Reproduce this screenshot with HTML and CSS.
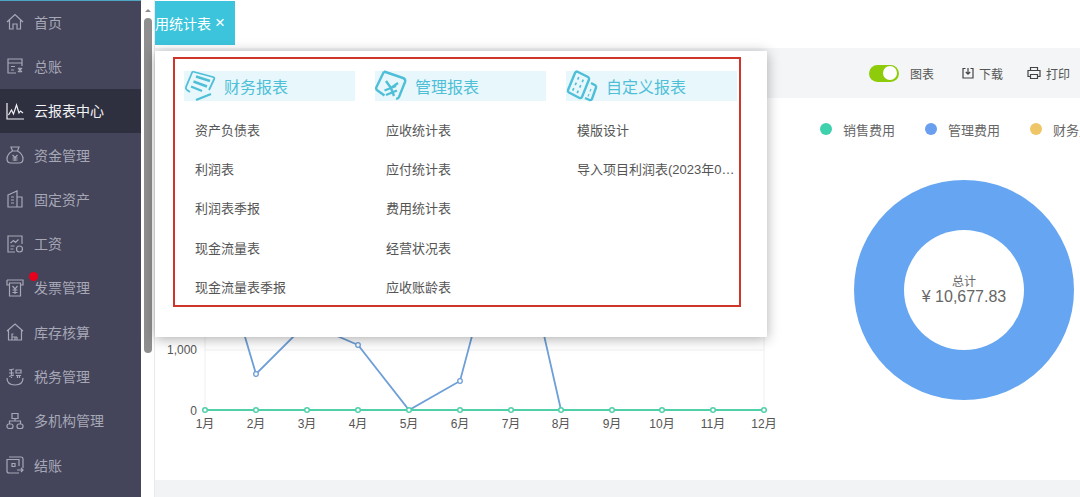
FILE: index.html
```html
<!DOCTYPE html>
<html>
<head>
  <meta charset="utf-8">
  <title>云报表中心</title>
  <link rel="stylesheet" href="styles.css">
</head>
<body>
  <div class="page">
    <div class="sidebar">
      <div class="nav-item">
        <svg class="nav-icon" viewBox="0 0 18 18"><path d="M1 9 9 1.500 17 9M3.500 7v9h3.500v-5h4v5h3.500V7"/></svg>
        <span>首页</span>
      </div>
      <div class="nav-item">
        <svg class="nav-icon" viewBox="0 0 18 18"><path d="M16 9V2H2v14h8M2 6h14M5 9.500h4M5 13h3M12 11l4 4M16 11l-4 4M14 10.500v5"/></svg>
        <span>总账</span>
      </div>
      <div class="nav-item active">
        <svg class="nav-icon" viewBox="0 0 18 18"><path d="M1 1v16h17M2.500 13l3-5 2 4 3-9 2.500 8 1.500-2 2.500 2"/></svg>
        <span>云报表中心</span>
      </div>
      <div class="nav-item">
        <svg class="nav-icon" viewBox="0 0 18 18"><path d="M5 1h8l-1.500 4h-5zM6.500 5C3 7 1 10 1 13c0 3 2 4 4 4h8c2 0 4-1 4-4 0-3-2-6-5.500-8M6.500 9 9 11.500 11.500 9M9 11.500V15M6.500 12h5M6.500 14h5"/></svg>
        <span>资金管理</span>
      </div>
      <div class="nav-item">
        <svg class="nav-icon" viewBox="0 0 18 18"><path d="M2 5 11 1v16H2zM11 7h5v10h-5M5 7h3M5 10h3M5 13h3"/></svg>
        <span>固定资产</span>
      </div>
      <div class="nav-item">
        <svg class="nav-icon" viewBox="0 0 18 18"><path d="M9 17H2V1h14v8M4.500 8l3-2.500 2 2 3-3M4.500 11h4M4.500 14h3"/><circle cx="13.500" cy="14" r="3"/></svg>
        <span>工资</span>
      </div>
      <div class="nav-item">
        <svg class="nav-icon" viewBox="0 0 18 18"><path d="M1 1h16v5h-2.500M1 1v5h2.500M3.500 4h11v13h-11zM6.500 7 9 10l2.500-3M6.500 11h5M6.500 13.500h5M9 10v5"/></svg>
        <span>发票管理</span>
      </div>
      <div class="nav-item">
        <svg class="nav-icon" viewBox="0 0 18 18"><path d="M1 8 9 1l8 7M2.500 7v10h13V7M6 17v-6h1.500M6 14h5M9 14v3M11 14v3"/></svg>
        <span>库存核算</span>
      </div>
      <div class="nav-item">
        <svg class="nav-icon" viewBox="0 0 18 18"><path d="M1 10c0 4.500 3 7 8 7s8-2.500 8-7M3 2l5-1M5.500 1.500V10M3 5h5M3 8.500 8 7M10 2h5v3h-5zM10 7.500h5M11.500 7.500V10M13.500 7.500V10"/></svg>
        <span>税务管理</span>
      </div>
      <div class="nav-item">
        <svg class="nav-icon" viewBox="0 0 18 18"><path d="M6 1.500h6v5H6zM9 6.500V9M3.500 12V9h11v3"/><rect x="1" y="12" width="6" height="4.500" rx="2"/><rect x="11" y="12" width="6" height="4.500" rx="2"/></svg>
        <span>多机构管理</span>
      </div>
      <div class="nav-item">
        <svg class="nav-icon" viewBox="0 0 18 18"><path d="M3 1h12a2 2 0 0 1 2 2v9M1 3v12a2 2 0 0 0 2 2h10M1 3.500h12V10M6 7.500h3v3H6zM11 14h6M15 12l2 2-2 2"/></svg>
        <span>结账</span>
      </div>
      <span class="nav-dot"></span>
    </div>

    <div class="scroll-track">
      <span class="scroll-arrow"></span>
      <span class="scroll-thumb"></span>
    </div>

    <div class="main">
      <div class="tabs">
        <div class="tab">用统计表<span class="tab-close">×</span></div>
      </div>

      <div class="toolbar">
        <span class="switch"><span class="switch-knob"></span></span>
        <span class="tool-label">图表</span>
        <span class="tool download">
          <svg class="tool-icon" viewBox="0 0 12 12"><path d="M3.500 1.500H1v9.500h10V1.500H8.500M6 1v6M3.800 5 6 7.200 8.200 5"/></svg>下载
        </span>
        <span class="tool print">
          <svg class="tool-icon wide" viewBox="0 0 14 14"><path d="M3.500 4.500V1.500h7v3M3.500 10.500H1V4.500h12v6h-2.500M3.500 8.500h7v4h-7z"/></svg>打印
        </span>
      </div>

      <div class="content">
        <svg class="line-chart" viewBox="155 98 640 382">
          <path class="grid" d="M205 337V410M764 337V410M205 350H764"/>
          <polyline class="line-blue" points="205,202 256,374 307,323 358,345 409,410 460,381 511,190 561,410 612,410"/>
          <g class="dots-blue">
            <circle cx="256" cy="374" r="2.300"/>
            <circle cx="358" cy="345" r="2.300"/>
            <circle cx="460" cy="381" r="2.300"/>
          </g>
          <line class="line-green" x1="205" y1="410" x2="764" y2="410"/>
          <g class="dots-green">
            <circle cx="205" cy="410" r="2.300"/>
            <circle cx="256" cy="410" r="2.300"/>
            <circle cx="307" cy="410" r="2.300"/>
            <circle cx="358" cy="410" r="2.300"/>
            <circle cx="409" cy="410" r="2.300"/>
            <circle cx="460" cy="410" r="2.300"/>
            <circle cx="511" cy="410" r="2.300"/>
            <circle cx="561" cy="410" r="2.300"/>
            <circle cx="612" cy="410" r="2.300"/>
            <circle cx="662" cy="410" r="2.300"/>
            <circle cx="713" cy="410" r="2.300"/>
            <circle cx="764" cy="410" r="2.300"/>
          </g>
          <g class="axis-y">
            <text x="197" y="354">1,000</text>
            <text x="197" y="415">0</text>
          </g>
          <g class="axis-x">
            <text x="205" y="428">1月</text>
            <text x="256" y="428">2月</text>
            <text x="307" y="428">3月</text>
            <text x="358" y="428">4月</text>
            <text x="409" y="428">5月</text>
            <text x="460" y="428">6月</text>
            <text x="511" y="428">7月</text>
            <text x="561" y="428">8月</text>
            <text x="612" y="428">9月</text>
            <text x="662" y="428">10月</text>
            <text x="713" y="428">11月</text>
            <text x="764" y="428">12月</text>
          </g>
        </svg>

        <div class="pie-panel">
          <div class="legend">
            <span class="legend-item"><i class="legend-dot green"></i>销售费用</span>
            <span class="legend-item"><i class="legend-dot blue"></i>管理费用</span>
            <span class="legend-item"><i class="legend-dot yellow"></i>财务费用</span>
          </div>
          <div class="donut">
            <div class="donut-hole">
              <span class="donut-label">总计</span>
              <span class="donut-value">¥ 10,677.83</span>
            </div>
          </div>
        </div>
      </div>

      <div class="footer-band"></div>

      <div class="popup">
        <div class="report-box">
          <div class="report-col">
            <div class="report-head">
              <svg class="report-icon" viewBox="0 0 32 32"><path d="M8.500 1.500 29 7q2 .6 1 2.500L25 20M8.500 1.500 2 17q-.5 2 1 3l3 2"/><path class="thick" d="M12 6.500 26 11M9.500 11.500 23 16.500M7 16.500 18 21M12 30l15-6"/></svg>
              <span>财务报表</span>
            </div>
            <ul class="report-list">
              <li>资产负债表</li>
              <li>利润表</li>
              <li>利润表季报</li>
              <li>现金流量表</li>
              <li>现金流量表季报</li>
            </ul>
          </div>
          <div class="report-col">
            <div class="report-head">
              <svg class="report-icon" viewBox="0 0 32 32"><path class="thick" d="M9 1.500 28 8q3 1 2 4l-6 15q-1 2-3 1.500M9 1.500 1.500 17q-1 2 1 3.500l7 5"/><path class="thick" d="M11 11l5 7 7-5M16 18l3 8M9.500 20.500 21 16M11 25l11-4.500"/></svg>
              <span>管理报表</span>
            </div>
            <ul class="report-list">
              <li>应收统计表</li>
              <li>应付统计表</li>
              <li>费用统计表</li>
              <li>经营状况表</li>
              <li>应收账龄表</li>
            </ul>
          </div>
          <div class="report-col">
            <div class="report-head">
              <svg class="report-icon" viewBox="0 0 32 32"><path class="thick" d="M11 1.500 22 7q1.500 1 1 2.500L16 27q-1 1.500-2.500 1L3 22.500q-1.500-1-1-2.500L9 3q.7-1.500 2-1.500zM25 13l4.500 2.500q1 1 .5 2L26 29q-1 1.500-2.500 1L19 28"/><path class="dots" d="M11.500 8l1.500.7M16 10.500l1.500.7M9 13.500l1.500.7M13.500 16l1.500.7M6.500 19l1.500.7M11 21.500l1.500.7M24 20l1 .5M22 25l1 .5"/></svg>
              <span>自定义报表</span>
            </div>
            <ul class="report-list">
              <li>模版设计</li>
              <li>导入项目利润表(2023年01月)</li>
            </ul>
          </div>
        </div>
      </div>
    </div>
  </div>
</body>
</html>
```

FILE: styles.css
```css
* {
  box-sizing: border-box;
}

body {
  margin: 0;
  font-family: "Liberation Sans", "Noto Sans CJK SC", sans-serif;
  overflow: hidden;
}

.page {
  display: flex;
  width: 1080px;
  height: 497px;
  overflow: hidden;
  background-color: #fff;
}

/* left menu */
.sidebar {
  position: relative;
  flex: 0 0 141px;
  background-color: #44445a;
  box-shadow: inset 0 1px 0 #4fa6c4;
  overflow: hidden;
}

.nav-item {
  display: flex;
  align-items: center;
  height: 44.3px;
  padding-left: 6px;
  font-size: 14px;
  color: #a6a8b6;
}

.nav-item span {
  margin: 0 0 1px 10px;
}

.nav-item.active {
  background-color: #2e3040;
  color: #f2f2f4;
}

.nav-icon {
  flex: none;
  width: 18px;
  height: 18px;
  fill: none;
  stroke: currentColor;
  stroke-width: 1.2;
}

.nav-dot {
  position: absolute;
  left: 29px;
  top: 272px;
  width: 9px;
  height: 9px;
  border-radius: 50%;
  background-color: #e8001c;
}

/* scrollbar next to the menu */
.scroll-track {
  position: relative;
  flex: 0 0 14px;
  background-color: #fff;
  border-right: 1px solid #e9e9e9;
}

.scroll-arrow {
  position: absolute;
  left: 4px;
  top: 9px;
  border-left: 3px solid transparent;
  border-right: 3px solid transparent;
  border-bottom: 3px solid #8d8d8d;
}

.scroll-thumb {
  position: absolute;
  left: 3px;
  top: 18px;
  width: 8px;
  height: 335px;
  border-radius: 4px;
  background-color: #8f8f8f;
}

/* main area */
.main {
  position: relative;
  flex: 1;
  min-width: 0;
  display: flex;
  flex-direction: column;
}

.tabs {
  flex: 0 0 48px;
  padding-top: 1px;
}

.tab {
  display: flex;
  align-items: center;
  width: 80px;
  height: 44px;
  background-color: #3cc4dc;
  color: #fff;
  font-size: 14px;
  white-space: nowrap;
}

.tab-close {
  margin-left: 4px;
  font-size: 17px;
  font-weight: 300;
}

.toolbar {
  flex: 0 0 50px;
  display: flex;
  align-items: center;
  justify-content: flex-end;
  padding-right: 10px;
  background-color: #f3f5f6;
  font-size: 12px;
  color: #555;
}

.switch {
  display: block;
  width: 30px;
  height: 17px;
  padding: 1.500px;
  border-radius: 9px;
  background-color: #8ecb0a;
}

.switch-knob {
  display: block;
  width: 14px;
  height: 14px;
  margin-left: auto;
  border-radius: 50%;
  background-color: #fff;
}

.tool-label {
  margin-left: 11px;
}

.tool {
  display: flex;
  align-items: center;
}

.download {
  margin-left: 28px;
}

.print {
  margin-left: 24px;
}

.tool-icon {
  width: 12px;
  height: 12px;
  margin-right: 5px;
  fill: none;
  stroke: #444;
  stroke-width: 1.200;
}

.tool-icon.wide {
  width: 14px;
  height: 14px;
}

.content {
  flex: 0 0 382px;
  display: flex;
  overflow: hidden;
}

.line-chart {
  flex: 0 0 640px;
  height: 382px;
}

.grid {
  fill: none;
  stroke: #efefef;
  stroke-width: 1;
}

.line-blue {
  fill: none;
  stroke: #6f9fd8;
  stroke-width: 1.800;
}

.dots-blue circle {
  fill: #fff;
  stroke: #6f9fd8;
  stroke-width: 1.300;
}

.line-green {
  stroke: #4fd0a8;
  stroke-width: 2;
}

.dots-green circle {
  fill: #fff;
  stroke: #4fd0a8;
  stroke-width: 1.500;
}

.axis-y text,
.axis-x text {
  font-size: 12px;
  fill: #555;
}

.axis-y text {
  text-anchor: end;
}

.axis-x text {
  text-anchor: middle;
}

.pie-panel {
  flex: 1;
  min-width: 0;
}

.legend {
  display: flex;
  align-items: center;
  height: 20px;
  margin-top: 21px;
  padding-left: 25px;
  font-size: 13px;
  color: #666;
  white-space: nowrap;
}

.legend-item {
  display: flex;
  flex: none;
  align-items: center;
  margin-right: 30px;
}

.legend-dot {
  width: 12px;
  height: 12px;
  margin-right: 11px;
  border-radius: 50%;
}

.legend-dot.green {
  background-color: #3ed1ae;
}

.legend-dot.blue {
  background-color: #6a9eee;
}

.legend-dot.yellow {
  background-color: #efc667;
}

.donut {
  display: flex;
  align-items: center;
  justify-content: center;
  width: 220px;
  height: 220px;
  margin: 41px 0 0 59px;
  border-radius: 50%;
  background-color: #65a5f1;
}

.donut-hole {
  display: flex;
  flex-direction: column;
  align-items: center;
  justify-content: center;
  width: 120px;
  height: 120px;
  border-radius: 50%;
  background-color: #fff;
  color: #666;
}

.donut-label {
  font-size: 12px;
  line-height: 13px;
}

.donut-value {
  font-size: 16px;
  line-height: 15px;
  white-space: nowrap;
}

.footer-band {
  flex: 1;
  background-color: #f1f3f5;
}

/* report dropdown */
.popup {
  position: absolute;
  left: 0;
  top: 51px;
  width: 612px;
  height: 286px;
  padding: 6px 26px 0 18px;
  background-color: #fff;
  box-shadow: 0 2px 12px rgba(0, 0, 0, 0.32);
}

.report-box {
  display: grid;
  grid-template-columns: repeat(3, 171px);
  column-gap: 20px;
  height: 250px;
  padding: 12px 0 0 9px;
  border: 2px solid #d0352b;
}

.report-col {
  min-width: 0;
}

.report-head {
  display: flex;
  align-items: center;
  height: 30px;
  background-color: #e8f7fb;
  font-size: 16px;
  color: #4fbfd8;
  white-space: nowrap;
}

.report-icon {
  flex: none;
  width: 32px;
  height: 32px;
  margin-right: 8px;
  fill: none;
  stroke: #4fbfd8;
  stroke-width: 1.800;
}

.report-icon .thick {
  stroke-width: 2.400;
}

.report-icon .dots {
  stroke-width: 2.600;
}

.report-list {
  list-style: none;
  margin: 10px 0 0;
  padding: 0 0 0 11px;
  font-size: 13px;
  color: #555;
}

.report-list li {
  height: 39.2px;
  line-height: 39.2px;
  overflow: hidden;
  white-space: nowrap;
  text-overflow: ellipsis;
}
```
